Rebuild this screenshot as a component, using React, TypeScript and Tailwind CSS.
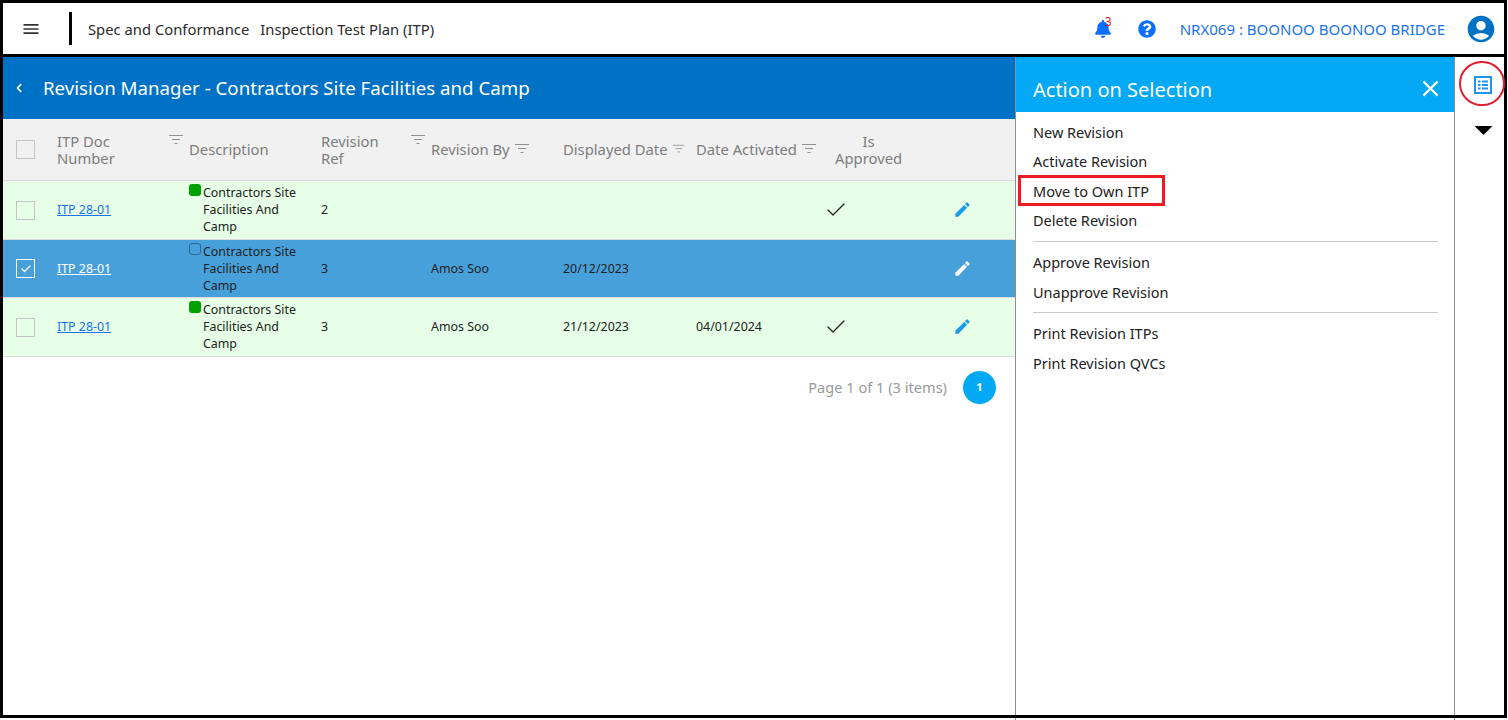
import { Check } from 'lucide-react'
import { MdAccountCircle, MdArrowDropDown, MdClose, MdEdit, MdMenu } from 'react-icons/md'
import { FaBell, FaChevronLeft, FaQuestionCircle } from 'react-icons/fa'

const columns = 'grid grid-cols-[42px_132px_132px_110px_132px_133px_138px_1fr]'

const rows = [
  { ref: '2', by: '', shown: '', activated: '', approved: true, selected: false, active: true, height: 'h-[59px]', descPad: 'pb-[1px]', textPad: '', editPad: 'mb-[2px]' },
  { ref: '3', by: 'Amos Soo', shown: '20/12/2023', activated: '', approved: false, selected: true, active: false, height: 'h-[58px]', descPad: 'pb-[1px]', textPad: 'pt-[2px]', editPad: '' },
  { ref: '3', by: 'Amos Soo', shown: '21/12/2023', activated: '04/01/2024', approved: true, selected: false, active: true, height: 'h-[59px]', descPad: 'pb-[2px]', textPad: '', editPad: 'mb-[2px]' },
]

function FilterIcon({ className = '' }: { className?: string }) {
  return (
    <svg width="14" height="10" viewBox="0 0 14 10" className={className}>
      <path d="M0 .5h14M3 4.5h8M5.5 8.5h3" stroke="#8f8f8f" strokeWidth="1" fill="none" />
    </svg>
  )
}

function ListIcon() {
  return (
    <svg width="18" height="18" viewBox="0 0 18 18" className="mt-[19px] text-[#1e96f0]">
      <rect x="1" y="1" width="16" height="16" fill="none" stroke="currentColor" strokeWidth="2" />
      <path d="M4 4.5h2.5v2H4zM4 8h2.5v2H4zM4 11.5h2.5v2H4zM8 4.5h6v2H8zM8 8h6v2H8zM8 11.5h6v2H8z" fill="currentColor" />
    </svg>
  )
}

function Checkbox({ checked = false, light = false }: { checked?: boolean; light?: boolean }) {
  return (
    <span
      className={`flex h-[19px] w-[19px] items-center justify-center border ${
        light ? 'border-white' : 'border-[#c4c4c4]'
      }`}
    >
      {checked ? <Check size={12} strokeWidth={2.4} className="text-white" /> : null}
    </span>
  )
}

function HeaderCell({ children, filter }: { children: React.ReactNode; filter?: string }) {
  return (
    <div className="relative flex h-full items-center whitespace-nowrap pl-3 text-[14.8px] leading-[17px] text-[#7d7d7d]">
      <span>{children}</span>
      {filter ? <FilterIcon className={filter} /> : null}
    </div>
  )
}

function ActionItem({ label, className = '' }: { label: string; className?: string }) {
  return <div className={`text-[14.5px] leading-5 text-[#222] ${className}`}>{label}</div>
}

export default function App() {
  return (
    <div className="relative h-[720px] w-[1508px] overflow-hidden bg-white font-['Noto_Sans',sans-serif]">
      <header className="flex h-[57px] w-[1507px] items-center border-b-[3px] border-black pl-[3px] pt-[3px] pr-[3px]">
        <MdMenu size={20} className="ml-[18px] text-[#333]" />
        <span className="ml-[28px] h-[33px] w-[3px] bg-black" />
        <span className="ml-[16px] mt-[2px] text-[14.8px] text-[#2b2b2b]">Spec and Conformance</span>
        <span className="ml-[11px] mt-[2px] text-[14.8px] text-[#2b2b2b]">Inspection Test Plan (ITP)</span>
        <div className="relative ml-auto">
          <FaBell size={18} className="text-[#0d6efd]" />
          <span className="absolute left-[11px] top-[-6px] text-[12px] leading-4 text-[#e81123]">3</span>
        </div>
        <FaQuestionCircle size={18} className="ml-[26px] text-[#0d6efd]" />
        <span className="ml-[24px] mt-[2px] text-[15px] text-[#1a73e8]">NRX069 : BOONOO BOONOO BRIDGE</span>
        <MdAccountCircle size={32} className="ml-[20px] mr-[7px] text-[#0072c6]" />
      </header>

      <div className="flex h-[663px]">
        <main className="ml-[3px] w-[1012px] shrink-0">
          <div className="flex h-[62px] items-center bg-[#0072c6] text-white">
            <FaChevronLeft size={10} className="ml-[11px]" />
            <h1 className="ml-[19px] text-[18.7px]">Revision Manager - Contractors Site Facilities and Camp</h1>
          </div>

          <div className={`${columns} h-[62px] border-b border-[#dcdcdc] bg-[#f1f1f1]`}>
            <div className="flex items-center pl-[13px]">
              <Checkbox />
            </div>
            <HeaderCell filter="absolute left-[124px] top-[16px]">
              ITP Doc
              <br />
              Number
            </HeaderCell>
            <HeaderCell>Description</HeaderCell>
            <HeaderCell filter="absolute left-[102px] top-[16px]">
              Revision
              <br />
              Ref
            </HeaderCell>
            <HeaderCell filter="ml-[5px] mb-[2px]">Revision By</HeaderCell>
            <HeaderCell filter="ml-[5px] mb-[2px]">Displayed Date</HeaderCell>
            <HeaderCell filter="ml-[5px] mb-[2px]">Date Activated</HeaderCell>
            <div className="flex h-full items-center text-center text-[14.8px] leading-[17px] text-[#7d7d7d]">
              <span className="ml-[13px]">
                Is
                <br />
                Approved
              </span>
            </div>
          </div>

          {rows.map((row, index) => (
            <div
              key={index}
              className={`${columns} ${row.height} border-b border-[#dcdcdc] text-[12.4px] text-[#222] ${
                row.selected ? 'bg-[#48a0da]' : 'bg-[#e6ffe6]'
              }`}
            >
              <div className="flex items-center pl-[13px]">
                <Checkbox checked={row.selected} light={row.selected} />
              </div>
              <div className={`flex items-center pl-3 ${row.textPad}`}>
                <a className={`underline ${row.selected ? 'text-white' : 'text-[#1a73e8]'}`}>ITP 28-01</a>
              </div>
              <div className={`flex items-center pl-3 ${row.descPad}`}>
                <span
                  className={`mb-auto mt-[3px] mr-[2px] h-3 w-3 shrink-0 rounded-[3px] ${
                    row.active ? 'bg-[#00a000]' : 'border border-[#2b6a99]'
                  }`}
                />
                <span className="leading-[17px]">
                  Contractors Site
                  <br />
                  Facilities And
                  <br />
                  Camp
                </span>
              </div>
              <div className={`flex items-center pl-3 ${row.textPad}`}>{row.ref}</div>
              <div className={`flex items-center pl-3 ${row.textPad}`}>{row.by}</div>
              <div className={`flex items-center pl-3 ${row.textPad}`}>{row.shown}</div>
              <div className={`flex items-center pl-3 ${row.textPad}`}>{row.activated}</div>
              <div className="flex items-center">
                {row.approved ? <Check size={24} strokeWidth={1.3} className="ml-[2px] text-[#222]" /> : null}
                <MdEdit
                  size={19}
                  className={`ml-auto mr-[43px] ${row.editPad} ${row.selected ? 'text-white' : 'text-[#1a9be8]'}`}
                />
              </div>
            </div>
          ))}

          <div className="flex items-center justify-end pr-[19px] pt-[14px]">
            <span className="text-[14.6px] text-[#9a9a9a]">Page 1 of 1 (3 items)</span>
            <span className="ml-4 flex h-[33px] w-[33px] items-center justify-center rounded-full bg-[#03a9f4] text-[11px] font-bold text-white">
              1
            </span>
          </div>
        </main>

        <aside className="h-full w-[439px] shrink-0 border-l border-[#8e8e8e]">
          <div className="flex h-[55px] items-center justify-between bg-[#03a9f4] pl-[17px] pr-[10px] text-white">
            <h2 className="pt-[10px] text-[20px]">Action on Selection</h2>
            <MdClose size={27} className="mt-[7px]" />
          </div>
          <div className="mx-[16px] pl-[1px] pt-[10px]">
            <ActionItem label="New Revision" />
            <ActionItem label="Activate Revision" className="mt-[9px]" />
            <ActionItem label="Move to Own ITP" className="mt-[10px]" />
            <ActionItem label="Delete Revision" className="mt-[9px]" />
            <div className="mt-[11px] border-t border-[#c8c8c8]" />
            <ActionItem label="Approve Revision" className="mt-[10px]" />
            <ActionItem label="Unapprove Revision" className="mt-[10px]" />
            <div className="mt-[10px] border-t border-[#c8c8c8]" />
            <ActionItem label="Print Revision ITPs" className="mt-[10px]" />
            <ActionItem label="Print Revision QVCs" className="mt-[10px]" />
          </div>
        </aside>

        <div className="flex h-full w-[50px] flex-col items-center border-l border-[#8e8e8e] pl-[7px]">
          <ListIcon />
          <MdArrowDropDown size={43} className="mt-[14px] text-black" />
        </div>
      </div>

      {/* screenshot annotations */}
      <div className="pointer-events-none absolute left-0 top-0 h-[718px] w-[1507px] border-[3px] border-black" />
      <div className="pointer-events-none absolute left-[1018px] top-[175px] h-[31px] w-[147px] border-[3px] border-[#ed1c24]" />
      <div className="pointer-events-none absolute left-[1459px] top-[61px] h-[45px] w-[46px] rounded-full border-2 border-[#e02030]" />
    </div>
  )
}
